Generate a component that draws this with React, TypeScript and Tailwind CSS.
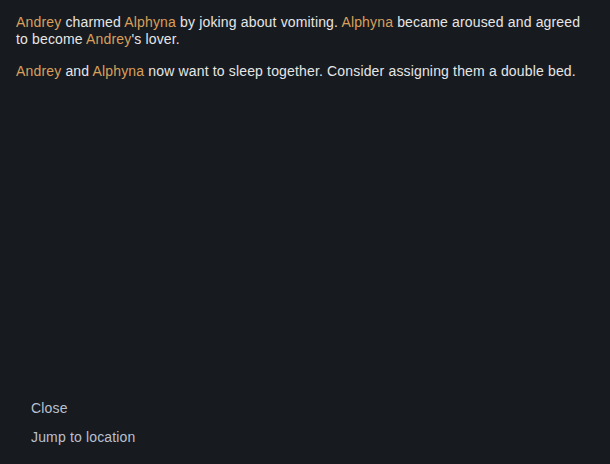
import React from "react";

const N = ({ children }: { children: React.ReactNode }) => (
  <span className="text-[#d9a05b]">{children}</span>
);

export default function App() {
  return (
    <div className="w-[610px] h-[464px] bg-[#171a1f] flex flex-col justify-between text-[14px] leading-[17px] tracking-[0.16px] text-[#e6e6e6] font-['Liberation_Sans',Arial,sans-serif] overflow-hidden">
      <div className="px-4 pt-[14px] pr-[24px] flex flex-col gap-[15px]">
        <p>
          <N>Andrey</N> charmed <N>Alphyna</N> by joking about vomiting. <N>Alphyna</N> became aroused and agreed to become <N>Andrey</N>'s lover.
        </p>
        <p>
          <N>Andrey</N> and <N>Alphyna</N> now want to sleep together. Consider assigning them a double bed.
        </p>
      </div>
      <div className="flex flex-col items-start pl-[31px] pb-[18px] gap-[12px] text-[#b9c0d0]">
        <button className="leading-[17px] tracking-[0.16px]">Close</button>
        <button className="leading-[17px] tracking-[0.16px]">Jump to location</button>
      </div>
    </div>
  );
}
